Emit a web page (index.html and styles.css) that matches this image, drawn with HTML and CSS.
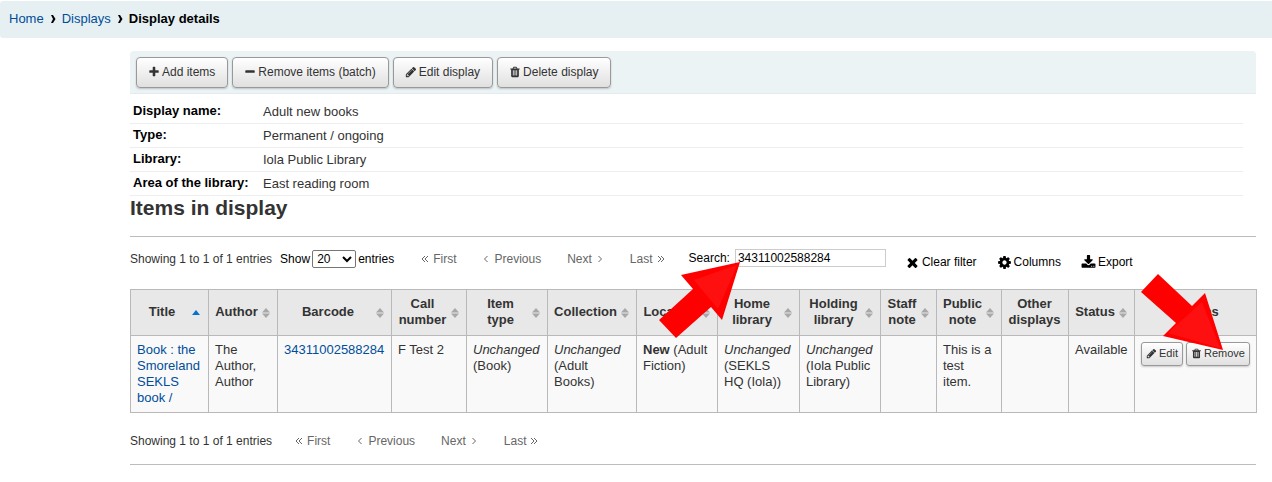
FILE: index.html
```html
<!DOCTYPE html>
<html lang="en">
<head>
<meta charset="utf-8">
<title>Display details</title>
<link rel="stylesheet" href="styles.css">
</head>
<body>
<svg class="defs" aria-hidden="true">
<symbol id="plus" viewBox="0 0 1792 1792"><path d="M1600 736v192q0 40-28 68t-68 28h-416v416q0 40-28 68t-68 28h-192q-40 0-68-28t-28-68v-416h-416q-40 0-68-28t-28-68v-192q0-40 28-68t68-28h416v-416q0-40 28-68t68-28h192q40 0 68 28t28 68v416h416q40 0 68 28t28 68z"/></symbol>
<symbol id="minus" viewBox="0 0 1792 1792"><path d="M1600 736v192q0 40-28 68t-68 28h-1216q-40 0-68-28t-28-68v-192q0-40 28-68t68-28h1216q40 0 68 28t28 68z"/></symbol>
<symbol id="pencil" viewBox="0 0 1792 1792"><path d="M491 1536l91-91-235-235-91 91v107h128v128h107zm523-928q0-22-22-22-10 0-17 7l-542 542q-7 7-7 17 0 22 22 22 10 0 17-7l542-542q7-7 7-17zm-54-192l416 416-832 832h-416v-416zm683 96q0 53-37 90l-166 166-416-416 166-165q36-38 90-38 53 0 91 38l235 234q37 39 37 91z"/></symbol>
<symbol id="trash" viewBox="0 0 1792 1792"><path fill-rule="evenodd" d="M1600 416v64q0 32-32 32h-96v948q0 204-160 204h-832q-160 0-160-200V512h-96q-32 0-32-32v-64q0-32 32-32h309l70-167q30-89 133-89h320q103 0 133 89l70 167h309q32 0 32 32zM672 384h448l-48-117q-7-11-17-11H738q-10 0-17 11zM576 640v768h128V640zM832 640v768h128V640zM1088 640v768h128V640z"/></symbol>
<symbol id="times" viewBox="0 0 1792 1792"><path d="M1490 1322q0 40-28 68l-136 136q-28 28-68 28t-68-28l-294-294-294 294q-28 28-68 28t-68-28l-136-136q-28-28-28-68t28-68l294-294-294-294q-28-28-28-68t28-68l136-136q28-28 68-28t68 28l294 294 294-294q28-28 68-28t68 28l136 136q28 28 28 68t-28 68l-294 294 294 294q28 28 28 68z"/></symbol>
<symbol id="cog" viewBox="0 0 1792 1792"><path d="M1152 896q0-106-75-181t-181-75-181 75-75 181 75 181 181 75 181-75 75-181zm512-109v222q0 12-8 23t-20 13l-185 28q-19 54-39 91 35 50 107 138 10 12 10 25t-9 23q-27 37-99 108t-94 71q-12 0-26-9l-138-108q-44 23-91 38-16 136-29 186-7 28-36 28h-222q-14 0-24.5-8.5t-11.5-21.5l-28-184q-49-16-90-37l-141 107q-10 9-25 9-14 0-25-11-126-114-165-168-7-10-7-23 0-12 8-23 15-21 51-66.5t54-70.5q-27-50-41-99l-183-27q-13-2-21-12.5t-8-23.5v-222q0-12 8-23t19-13l186-28q14-46 39-92-40-57-107-138-10-12-10-24 0-10 9-23 26-36 98.5-107.5t94.5-71.5q13 0 26 10l138 107q44-23 91-38 16-136 29-186 7-28 36-28h222q14 0 24.5 8.5t11.5 21.5l28 184q49 16 90 37l142-107q9-9 24-9 13 0 25 10 129 119 165 170 7 8 7 22 0 12-8 23-15 21-51 66.5t-54 70.5q26 50 41 98l183 28q13 2 21 12.5t8 23.5z"/></symbol>
<symbol id="download" viewBox="0 0 1792 1792"><path d="M1344 1344q0-26-19-45t-45-19-45 19-19 45 19 45 45 19 45-19 19-45zm256 0q0-26-19-45t-45-19-45 19-19 45 19 45 45 19 45-19 19-45zm128-224v320q0 40-28 68t-68 28h-1472q-40 0-68-28t-28-68v-320q0-40 28-68t68-28h465l135 136q58 56 136 56t136-56l136-136h464q40 0 68 28t28 68zm-325-569q17 41-14 70l-448 448q-18 19-45 19t-45-19l-448-448q-31-29-14-70 17-39 59-39h256v-448q0-26 19-45t45-19h256q26 0 45 19t19 45v448h256q42 0 59 39z"/></symbol>
<symbol id="sep" viewBox="0 0 6 8"><path d="M1 0h2L5.500 4 3 8H1l2-4z"/></symbol>
<symbol id="one-left" viewBox="0 0 8 8"><path class="line" d="M5.500 1 2.500 4l3 3"/></symbol>
<symbol id="one-right" viewBox="0 0 8 8"><path class="line" d="M2.500 1l3 3-3 3"/></symbol>
<symbol id="two-left" viewBox="0 0 8 8"><path class="line" d="M4 1 1 4l3 3M7 1 4 4l3 3"/></symbol>
<symbol id="two-right" viewBox="0 0 8 8"><path class="line" d="M1 1l3 3-3 3M4 1l3 3-3 3"/></symbol>
<symbol id="sort" viewBox="0 0 8 10"><path d="M0 4.500 4 0l4 4.500zM0 5.500h8L4 10z"/></symbol>
<symbol id="asc" viewBox="0 0 10 10"><path d="M1 8l4-5 4 5z"/></symbol>
</svg>

<nav class="breadcrumbs" aria-label="Breadcrumb">
  <a href="#">Home</a><svg class="sep"><use href="#sep"/></svg><a href="#">Displays</a><svg class="sep"><use href="#sep"/></svg><strong>Display details</strong>
</nav>

<main class="main">
  <div class="toolbar">
    <button class="btn"><svg class="icon"><use href="#plus"/></svg>Add items</button>
    <button class="btn"><svg class="icon"><use href="#minus"/></svg>Remove items (batch)</button>
    <button class="btn"><svg class="icon"><use href="#pencil"/></svg>Edit display</button>
    <button class="btn"><svg class="icon"><use href="#trash"/></svg>Delete display</button>
  </div>

  <dl class="details">
    <div class="detail"><dt>Display name:</dt><dd>Adult new books</dd></div>
    <div class="detail"><dt>Type:</dt><dd>Permanent / ongoing</dd></div>
    <div class="detail"><dt>Library:</dt><dd>Iola Public Library</dd></div>
    <div class="detail"><dt>Area of the library:</dt><dd>East reading room</dd></div>
  </dl>

  <h2 class="heading">Items in display</h2>

  <section class="listing">
    <div class="controls">
      <span class="info">Showing 1 to 1 of 1 entries</span>
      <label class="length">Show <select><option>20</option></select> entries</label>
      <div class="pager">
        <button><svg class="chev"><use href="#two-left"/></svg>First</button>
        <button><svg class="chev"><use href="#one-left"/></svg>Previous</button>
        <button>Next<svg class="chev"><use href="#one-right"/></svg></button>
        <button>Last<svg class="chev"><use href="#two-right"/></svg></button>
      </div>
      <div class="search">
        <label for="search">Search:</label>
        <input id="search" type="text" value="34311002588284">
        <svg class="arrow arrow-search" viewBox="659 262 82 76" aria-hidden="true"><path class="arrow-body" d="M740 262 681 275l12 14-34 31 17 18 35-31 11 13z"/><path class="arrow-tint" d="M737 265 694 280l24 29z"/></svg>
      </div>
      <div class="tools">
        <button><svg class="tool"><use href="#times"/></svg>Clear filter</button>
        <button><svg class="tool"><use href="#cog"/></svg>Columns</button>
        <button><svg class="tool"><use href="#download"/></svg>Export</button>
      </div>
    </div>

    <table class="items">
      <colgroup><col class="c78"><col class="c69"><col class="c114"><col class="c75"><col class="c81"><col class="c89"><col class="c81"><col class="c82"><col class="c81"><col class="c56"><col class="c65"><col class="c67"><col class="c66"><col class="c122"></colgroup>
      <thead>
        <tr>
          <th><div class="head"><span>Title</span><svg class="asc"><use href="#asc"/></svg></div></th>
          <th><div class="head"><span>Author</span><svg class="sort"><use href="#sort"/></svg></div></th>
          <th><div class="head"><span>Barcode</span><svg class="sort"><use href="#sort"/></svg></div></th>
          <th><div class="head"><span>Call number</span><svg class="sort"><use href="#sort"/></svg></div></th>
          <th><div class="head"><span>Item type</span><svg class="sort"><use href="#sort"/></svg></div></th>
          <th><div class="head"><span>Collection</span><svg class="sort"><use href="#sort"/></svg></div></th>
          <th><div class="head"><span>Location</span><svg class="sort"><use href="#sort"/></svg></div></th>
          <th><div class="head"><span>Home library</span><svg class="sort"><use href="#sort"/></svg></div></th>
          <th><div class="head"><span>Holding library</span><svg class="sort"><use href="#sort"/></svg></div></th>
          <th><div class="head"><span>Staff note</span><svg class="sort"><use href="#sort"/></svg></div></th>
          <th><div class="head"><span>Public note</span><svg class="sort"><use href="#sort"/></svg></div></th>
          <th><div class="head"><span>Other displays</span></div></th>
          <th><div class="head"><span>Status</span><svg class="sort"><use href="#sort"/></svg></div></th>
          <th><div class="head"><span>Actions</span></div></th>
        </tr>
      </thead>
      <tbody>
        <tr>
          <td><a href="#">Book : the Smoreland SEKLS book /</a></td>
          <td>The Author, Author</td>
          <td><a href="#">34311002588284</a></td>
          <td>F Test 2</td>
          <td><em>Unchanged</em> (Book)</td>
          <td><em>Unchanged</em> (Adult Books)</td>
          <td><strong>New</strong> (Adult Fiction)</td>
          <td><em>Unchanged</em> (SEKLS HQ (Iola))</td>
          <td><em>Unchanged</em> (Iola Public Library)</td>
          <td></td>
          <td>This is a test item.</td>
          <td></td>
          <td>Available</td>
          <td>
            <div class="actions">
              <button class="btn btn-small"><svg class="icon"><use href="#pencil"/></svg>Edit</button>
              <button class="btn btn-small"><svg class="icon"><use href="#trash"/></svg>Remove</button>
              <svg class="arrow arrow-remove" viewBox="1141 274 82 76" aria-hidden="true"><path class="arrow-body" d="M1158 274l-17 18 35 31-13 13 60 14-18-57-13 13z"/><path class="arrow-tint" d="M1202 302l-34 31 52 15z"/></svg>
            </div>
          </td>
        </tr>
      </tbody>
    </table>

    <div class="controls controls-bottom">
      <span class="info">Showing 1 to 1 of 1 entries</span>
      <div class="pager">
        <button><svg class="chev"><use href="#two-left"/></svg>First</button>
        <button><svg class="chev"><use href="#one-left"/></svg>Previous</button>
        <button>Next<svg class="chev"><use href="#one-right"/></svg></button>
        <button>Last<svg class="chev"><use href="#two-right"/></svg></button>
      </div>
    </div>
  </section>
</main>
</body>
</html>
```
FILE: styles.css
```css
* { box-sizing: border-box; }
body { margin: 0; padding-top: 1px; background: #fff; color: #333; font: 12px/16px "Liberation Sans", Arial, sans-serif; }
button, input, select { font: inherit; color: inherit; }
button { cursor: pointer; }
a { color: #004d99; text-decoration: none; }
svg { flex: none; fill: currentColor; }
.defs { display: none; }
.line { fill: none; stroke: currentColor; stroke-width: 1; }

.breadcrumbs { display: flex; align-items: center; height: 37px; padding: 0 9px 2px; border-radius: 3px 0 0 3px; background: #e6f0f2; color: #000; font-size: 13px; }
.sep { width: 6px; height: 8px; margin: 0 6px; }

.main { margin: 13px 16px 0 130px; }
.toolbar { display: flex; gap: 4px; padding: 6px 6px 5px; border: 0 solid #e0ecee; border-bottom-width: 1px; border-radius: 4px 4px 0 0; background: #ebf3f5; }
.btn { display: flex; align-items: center; gap: 2px; height: 31px; padding: 0 12px 0 11px; border: 1px solid #999; border-radius: 4px; background: linear-gradient(#fff, #e0e0e0); box-shadow: 0 1px 2px rgba(0, 0, 0, .2); white-space: nowrap; }
.toolbar .btn { padding-bottom: 2px; }
.icon { width: 12px; height: 12px; }
.btn-small { height: 24px; padding: 0 4px 2px; border-radius: 3px; font-size: 11px; }
.btn-small .icon { width: 11px; height: 11px; }

.details { margin: 6px 13px 0 0; font-size: 13px; }
.detail { display: flex; height: 24px; padding-left: 3px; border-bottom: 1px solid #eee; }
.detail dt { width: 130px; padding-top: 3px; color: #000; font-weight: bold; }
.detail dd { margin: 0; padding-top: 4px; }
.heading { margin: 0; font-size: 21px; line-height: 24px; }

.listing { margin-top: 16px; border: 1px solid #bcbcbc; border-width: 1px 0; }
.controls { display: flex; align-items: center; height: 44px; white-space: nowrap; }
.length { display: flex; align-items: center; gap: 2px; margin-left: 8px; color: #000; }
.length select { width: 44px; height: 18px; padding: 0; border: 1px solid #767676; border-radius: 2px; background: #fff; }
.pager { display: flex; gap: 26px; margin-left: 27px; color: #666; }
.pager button, .tools button { display: flex; align-items: center; padding: 0; border: 0; background: none; }
.pager button { gap: 4px; }
.chev { width: 8px; height: 8px; }
.search { position: relative; display: flex; align-items: center; gap: 5px; margin-left: 24px; padding-bottom: 2px; color: #000; }
.search input { width: 151px; height: 18px; padding: 0 2px; border: 1px solid #ccc; border-radius: 0; background: #fff; }
.tools { display: flex; gap: 20px; margin-left: 19px; padding-top: 6px; color: #000; }
.tools button { gap: 2px; }
.tool { width: 15px; height: 15px; }

.items { width: 100%; margin-top: 8px; border-collapse: collapse; table-layout: fixed; font-size: 13px; line-height: 16px; }
.items th, .items td { border: 1px solid #b9b9b9; }
.items th { height: 46px; padding: 0 7px 0 6px; background: #e8e8e8; }
.items td { height: 77px; padding: 6px; background: #f9f9f9; vertical-align: top; }
.head { display: flex; align-items: center; gap: 4px; padding-bottom: 2px; }
.head span { flex: 1; text-align: center; }
.sort { width: 8px; height: 10px; margin-top: 2px; color: #a8a8a8; }
.asc { width: 10px; height: 10px; color: #0771cf; }
.c56 { width: 56px; } .c65 { width: 65px; } .c66 { width: 66px; } .c67 { width: 67px; }
.c69 { width: 69px; } .c75 { width: 75px; } .c78 { width: 78px; } .c81 { width: 81px; }
.c82 { width: 82px; } .c89 { width: 89px; } .c114 { width: 114px; } .c122 { width: 122px; }
.actions { position: relative; display: flex; gap: 3px; }
.controls-bottom { height: 51px; padding-top: 4px; }
.controls-bottom .pager { margin-left: 23px; }

.arrow { position: absolute; width: 82px; height: 76px; pointer-events: none; }
.arrow-search { top: 13px; left: -30px; }
.arrow-remove { right: 27px; bottom: 16px; }
.arrow-body { fill: #f00; }
.arrow-tint { fill: #ff1010; }
```
